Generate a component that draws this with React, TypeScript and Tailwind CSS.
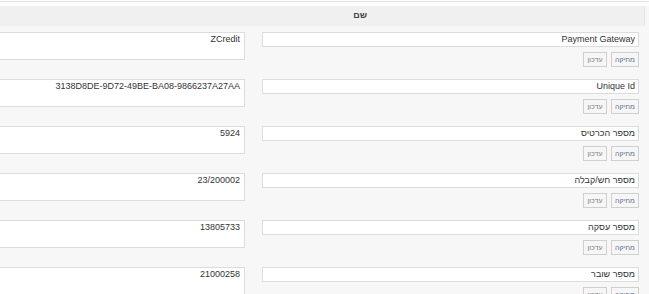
const rows = [
  { name: "Payment Gateway", value: "ZCredit" },
  { name: "Unique Id", value: "3138D8DE-9D72-49BE-BA08-9866237A27AA" },
  { name: "מספר הכרטיס", value: "5924" },
  { name: "מספר חש/קבלה", value: "23/200002" },
  { name: "מספר עסקה", value: "13805733" },
  { name: "מספר שובר", value: "21000258" },
];

function Row({ name, value }: { name: string; value: string }) {
  return (
    <div className="flex h-[47px] shrink-0">
      <div className="w-[387px] shrink-0 pr-[10px]">
        <div className="h-[15px] border border-[#dcdcdc] bg-white pr-[3px] text-right text-[9px] leading-[13px] text-[#333]">
          {name}
        </div>
        <div className="mt-[5px] flex gap-[4px]">
          <button className="h-[15px] w-[28px] border border-[#cfcfcf] bg-[#f6f6f6] text-[7px] leading-[13px] text-[#5b6b8c]">
            מחיקה
          </button>
          <button className="h-[15px] w-[24px] border border-[#cfcfcf] bg-[#f6f6f6] text-[7px] leading-[13px] text-[#7a7a7a]">
            עדכון
          </button>
        </div>
      </div>
      <div className="w-[17px] shrink-0" />
      <div className="flex-1">
        <div className="h-[28px] border border-l-0 border-[#dcdcdc] bg-white pr-[4px] text-right text-[9px] leading-[13px] text-[#333]">
          {value}
        </div>
      </div>
    </div>
  );
}

export default function App() {
  return (
    <div
      className="h-[294px] w-[649px] overflow-hidden bg-[#f7f7f7]"
      style={{ fontFamily: '"Liberation Sans", Arial, sans-serif' }}
    >
      <div className="h-[6px] bg-white pt-px">
        <div className="border-t border-[#e3e3e3]" />
      </div>
      <div dir="rtl" className="mr-[4px] flex h-[20px] items-center border-r border-[#e6e6e6] bg-[#f0f0f0] pr-[277px] pl-[4px]">
        <span className="text-[9px] font-bold text-[#444]">שם</span>
      </div>
      <div dir="rtl" className="flex flex-col pt-[6px]">
        {rows.map(r => (
          <Row key={r.name} name={r.name} value={r.value} />
        ))}
      </div>
    </div>
  );
}
